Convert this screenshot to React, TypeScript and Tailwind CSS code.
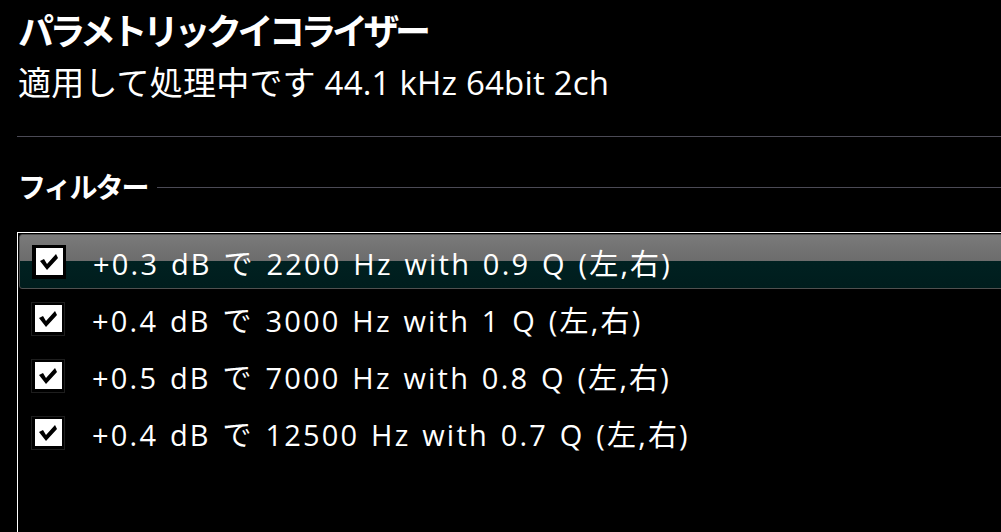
import React from 'react'

type Filter = {
  id: number
  label: string
  checked: boolean
}

const filters: Filter[] = [
  { id: 1, label: '+0.3 dB で 2200 Hz with 0.9 Q (左,右)', checked: true },
  { id: 2, label: '+0.4 dB で 3000 Hz with 1 Q (左,右)', checked: true },
  { id: 3, label: '+0.5 dB で 7000 Hz with 0.8 Q (左,右)', checked: true },
  { id: 4, label: '+0.4 dB で 12500 Hz with 0.7 Q (左,右)', checked: true },
]

function CheckBox({ selected }: { selected: boolean }) {
  return (
    <div
      className={
        selected
          ? 'flex h-[34px] w-[34px] shrink-0 items-center justify-center bg-black'
          : 'flex h-[34px] w-[34px] shrink-0 items-center justify-center border border-[#1e1e1e] bg-black'
      }
    >
      <div className="flex h-[27px] w-[27px] items-center justify-center bg-white">
        <svg width="20" height="18" viewBox="0 0 20 18">
          <polygon points="1,8 5,6 8,11 17,1 19,5 8,17" fill="#000" />
        </svg>
      </div>
    </div>
  )
}

export default function App() {
  return (
    <div
      className="h-[532px] w-[1001px] overflow-hidden bg-black text-white"
      style={{ fontFamily: '"Open Sans", "Noto Sans CJK JP", sans-serif' }}
    >
      <div className="pl-[18px] pt-[8px]">
        <h1 className="text-[36px] font-bold leading-[48px] tracking-[-4.5px]">パラメトリックイコライザー</h1>
        <p className="mt-[7px] text-[33px] leading-[40px] tracking-[0.2px]">適用して処理中です 44.1 kHz 64bit 2ch</p>
      </div>

      <div className="ml-[17px] mt-[33px] h-px bg-[#4b4a55]" />

      <div className="mt-[33px] flex items-center pl-[18px]">
        <span className="text-[28px] font-bold leading-[34px] tracking-[-2px]">フィルター</span>
        <div className="ml-[10px] h-px flex-1 bg-[#4b4a55]" />
      </div>

      <div className="ml-[17px] mt-[28px] h-[400px] w-[1010px] border-l border-t border-white pt-[1px]">
        {filters.map((f, i) => {
          const selected = i === 0
          return (
            <div
              key={f.id}
              className={
                selected
                  ? 'ml-[1px] flex h-[55px] items-center rounded-[3px] border border-[#505050] bg-[linear-gradient(to_bottom,#7a7a7a_0%,#6c6c6c_49%,#002121_49%,#001d1d_100%)] pl-[12px]'
                  : 'ml-[1px] mt-[2px] flex h-[55px] items-center pl-[12px]'
              }
            >
              <CheckBox selected={selected} />
              <span className="ml-[27px] whitespace-nowrap pt-[4px] text-[29px] leading-[36px] tracking-[2.2px] [word-spacing:2px]">
                {f.label}
              </span>
            </div>
          )
        })}
      </div>
    </div>
  )
}
